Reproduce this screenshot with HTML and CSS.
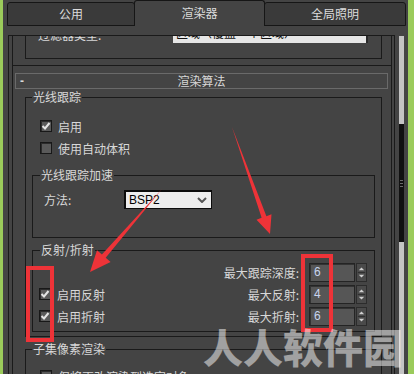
FILE: index.html
```html
<!DOCTYPE html>
<html lang="zh-CN">
<head>
    <meta charset="UTF-8">
    <title>渲染设置</title>
    <link rel="stylesheet" href="styles.css">
</head>
<body>
    <div class="app">
        <div class="edge-left"></div>
        <div class="main">
            <div class="tabs">
                <div class="tab tab-common">公用</div>
                <div class="tab tab-render">渲染器</div>
                <div class="tab tab-gi">全局照明</div>
            </div>
            <div class="panel">
                <div class="scroll">
                    <!-- previous rollout, scrolled mostly out of view -->
                    <div class="rollout prev">
                        <div class="prev-group">
                            <div class="prev-row">
                                <span class="prev-label">过滤器类型:</span>
                                <span class="prev-input">区域（覆盖一个区域）</span>
                            </div>
                        </div>
                    </div>

                    <div class="rollout render">
                        <div class="rollout-head">
                            <span class="minus">-</span>
                            <span class="head-title">渲染算法</span>
                            <span></span>
                        </div>

                        <fieldset class="group group-rt">
                            <legend>光线跟踪</legend>
                            <div class="check-row first">
                                <span class="check on"><svg width="10" height="10" viewBox="0 0 10 10"><polyline points="1.5,5 4,7.5 8.5,2" /></svg></span>
                                <span>启用</span>
                            </div>
                            <div class="check-row">
                                <span class="check"></span>
                                <span>使用自动体积</span>
                            </div>

                            <fieldset class="group group-accel">
                                <legend>光线跟踪加速</legend>
                                <div class="method-row">
                                    <span class="method-label">方法:</span>
                                    <div class="dropdown">
                                        <span>BSP2</span>
                                        <svg width="10" height="6" viewBox="0 0 10 6"><polyline points="1,1 5,5 9,1" /></svg>
                                    </div>
                                </div>
                            </fieldset>

                            <fieldset class="group group-refl">
                                <legend>反射/折射</legend>
                                <div class="refl-grid">
                                    <span></span>
                                    <span class="spin-label">最大跟踪深度:</span>
                                    <span class="spin-input">6</span>
                                    <span class="spin-btn"><svg width="10" height="17" viewBox="0 0 10 17"><polygon points="2,6 8,6 5,3" /><line x1="1" y1="8.5" x2="9" y2="8.5" /><polygon points="2,11 8,11 5,14" /></svg></span>

                                    <div class="check-row">
                                        <span class="check on"><svg width="10" height="10" viewBox="0 0 10 10"><polyline points="1.5,5 4,7.5 8.5,2" /></svg></span>
                                        <span>启用反射</span>
                                    </div>
                                    <span class="spin-label">最大反射:</span>
                                    <span class="spin-input">4</span>
                                    <span class="spin-btn"><svg width="10" height="17" viewBox="0 0 10 17"><polygon points="2,6 8,6 5,3" /><line x1="1" y1="8.5" x2="9" y2="8.5" /><polygon points="2,11 8,11 5,14" /></svg></span>

                                    <div class="check-row">
                                        <span class="check on"><svg width="10" height="10" viewBox="0 0 10 10"><polyline points="1.5,5 4,7.5 8.5,2" /></svg></span>
                                        <span>启用折射</span>
                                    </div>
                                    <span class="spin-label">最大折射:</span>
                                    <span class="spin-input">6</span>
                                    <span class="spin-btn"><svg width="10" height="17" viewBox="0 0 10 17"><polygon points="2,6 8,6 5,3" /><line x1="1" y1="8.5" x2="9" y2="8.5" /><polygon points="2,11 8,11 5,14" /></svg></span>
                                </div>
                            </fieldset>
                        </fieldset>

                        <fieldset class="group group-sub">
                            <legend>子集像素渲染</legend>
                            <div class="check-row first">
                                <span class="check"></span>
                                <span>仅将更改渲染到选定对象</span>
                            </div>
                        </fieldset>
                    </div>
                </div>
                <div class="scrollbar">
                    <div class="thumb"><i></i><i></i><i></i></div>
                </div>
            </div>
        </div>
        <div class="edge-right"></div>
    </div>

    <!-- annotations drawn over the screenshot -->
    <svg class="marks" width="414" height="374" viewBox="0 0 414 374">
        <rect x="28" y="268" width="24" height="72" />
        <rect x="303" y="256" width="28" height="74" />
        <polygon points="232,127 266.4,216.2 271.5,214.3 270,234 256.5,219.7 261.6,217.8" />
        <polygon points="162,189 105.7,257.7 110.6,262 90,272 97,250.2 101.9,254.5" />
    </svg>
    <div class="watermark">人人软件园</div>
</body>
</html>
```

FILE: styles.css
```css
* {
    box-sizing: border-box;
}
body {
    margin: 0;
    width: 414px;
    height: 374px;
    overflow: hidden;
    position: relative;
    background-color: #444444;
    font-family: "Noto Sans CJK SC", "Liberation Sans", sans-serif;
    font-size: 12px;
    color: #d8d8d8;
}
.app {
    display: flex;
    height: 374px;
}
.edge-left {
    width: 3px;
    background-color: #9bcb5b; /* desktop green */
}
.edge-right {
    width: 6px;
    background-color: #9bcb5b;
}
.main {
    flex: 1;
    min-width: 0;
    display: flex;
    flex-direction: column;
}

/* tabs */
.tabs {
    display: flex;
    align-items: flex-end;
    height: 26px;
    padding: 0 0 0 4px;
}
.tab {
    height: 24px;
    line-height: 22px;
    text-align: center;
    background-color: #3a3a3a;
    border: 1px solid #161616;
    border-radius: 3px 3px 0 0;
    color: #dcdcdc;
}
.tab-common {
    width: 128px;
}
.tab-render {
    width: 131px;
    height: 26px;
    line-height: 24px;
    margin: 0 -1px;
    background-color: #444444;
    border-bottom: none;
    position: relative;
}
.tab-gi {
    width: 142px;
}

/* panel with scroll area */
.panel {
    flex: 1;
    min-height: 0;
    display: flex;
    padding: 9px 4px 0 5px;
}
.scroll {
    width: 387px;
    border: 1px solid #1a1a1a;
    border-bottom: none;
    overflow: hidden;
}
.scrollbar {
    width: 5px;
    margin: 1px 0 0 4px;
    background-color: #c4c4c4;
    display: flex;
    flex-direction: column;
}
.thumb {
    margin-top: 88px;
    height: 118px;
    background-color: #101010;
    display: flex;
    flex-direction: column;
    justify-content: center;
    align-items: center;
    gap: 2px;
}
.thumb i {
    display: block;
    width: 3px;
    height: 1px;
    background-color: #6a6a6a;
}

/* rollouts */
.rollout {
    margin: 0 2px 0 3px;
    border-left: 1px solid #1a1a1a;
    border-right: 1px solid #1a1a1a;
}
.prev {
    height: 30px;
    border-bottom: 1px solid #1a1a1a;
    display: flow-root;
}
.prev-group {
    display: flow-root;
    height: 23px;
    margin: 0 9px 6px 12px;
    border: 1px solid #1a1a1a;
    border-top: none;
}
.prev-row {
    display: flex;
    align-items: center;
    height: 16px;
    margin-top: -10px;
    padding-left: 12px;
}
.prev-label {
    width: 135px;
}
.prev-input {
    width: 193px;
    height: 18px;
    line-height: 16px;
    padding-left: 3px;
    background-color: #e6e6e6;
    color: #111111;
    box-shadow: 2px 0 0 #2a2a2a;
}
.render {
    padding-top: 7px;
}
.rollout-head {
    display: grid;
    grid-template-columns: 1fr auto 1fr;
    align-items: center;
    height: 16px;
    margin: 0 3px 0 2px;
    border: 1px solid #6a6a6a;
    line-height: 14px;
}
.minus {
    padding-left: 4px;
    font-family: "Liberation Sans", sans-serif;
    font-weight: bold;
}

/* group boxes */
.group {
    margin: 0;
    padding: 0 6px;
    min-width: 0;
    border: 1px solid #1a1a1a;
}
.group legend {
    padding: 0 1px;
    height: 16px;
    line-height: 16px;
}
.group-rt {
    margin: 0 9px 0 12px;
    padding-bottom: 4px;
}
.group-accel {
    margin-top: 8px;
    padding: 0 7px 28px;
}
.group-refl {
    margin-top: 4px;
    padding: 0 7px 4px;
}
.group-sub {
    margin: 4px 9px 0 12px;
}
.check-row {
    display: flex;
    align-items: center;
    gap: 6px;
    height: 22px;
    padding-left: 8px;
}
.check-row.first {
    margin-top: 10px;
}
.group-sub .check-row.first {
    margin-top: 8px;
}
.check {
    width: 12px;
    height: 12px;
    flex: none;
    display: flex;
    align-items: center;
    justify-content: center;
    background-color: #5a5a5a;
    border: 1px solid #181818;
    box-shadow: inset 1px 1px 0 #2c2c2c;
}
.check svg polyline {
    fill: none;
    stroke: #e4e4e4;
    stroke-width: 2;
}

/* method dropdown */
.method-row {
    display: flex;
    align-items: center;
    height: 19px;
    margin-top: 7px;
    padding-left: 4px;
}
.method-label {
    width: 80px;
}
.dropdown {
    width: 88px;
    height: 19px;
    display: flex;
    align-items: center;
    justify-content: space-between;
    padding: 0 4px 0 3px;
    background-color: #ededed;
    border: 1px solid #0c0c0c;
    border-width: 2px 1px 1px 2px;
    color: #000000;
    font-family: "Liberation Sans", sans-serif;
}
.dropdown polyline {
    fill: none;
    stroke: #555555;
    stroke-width: 2;
}

/* reflection / refraction spinners */
.refl-grid {
    display: grid;
    grid-template-columns: 1fr auto 46px 12px;
    grid-auto-rows: 22px;
    align-items: center;
    margin-top: 3px;
}
.refl-grid .check-row {
    padding-left: 0;
    margin-left: -1px;
}
.spin-label {
    text-align: right;
    padding-right: 10px;
}
.spin-input {
    height: 19px;
    line-height: 17px;
    padding-left: 4px;
    background-color: #565656;
    border: 1px solid #242424;
    box-shadow: inset 1px 1px 0 #333333;
    color: #c8d4ee;
    font-family: "Liberation Sans", sans-serif;
}
.spin-btn {
    height: 19px;
    margin-left: 1px;
    width: 11px;
    display: flex;
    align-items: center;
    justify-content: center;
    background-color: #4a4a4a;
    border: 1px solid #2c2c2c;
}
.spin-btn polygon {
    fill: #d0d0d0;
}
.spin-btn line {
    stroke: #2c2c2c;
    stroke-width: 1;
}

/* overlays */
.marks {
    position: absolute;
    left: 0;
    top: 0;
}
.marks rect {
    fill: none;
    stroke: #ee3338;
    stroke-width: 4;
}
.marks polygon {
    fill: #ee3338;
}
.watermark {
    position: absolute;
    left: 203px;
    top: 326px;
    font-size: 40px;
    line-height: 40px;
    font-weight: 900;
    color: rgba(255, 255, 255, 0.5);
    white-space: nowrap;
}
```
